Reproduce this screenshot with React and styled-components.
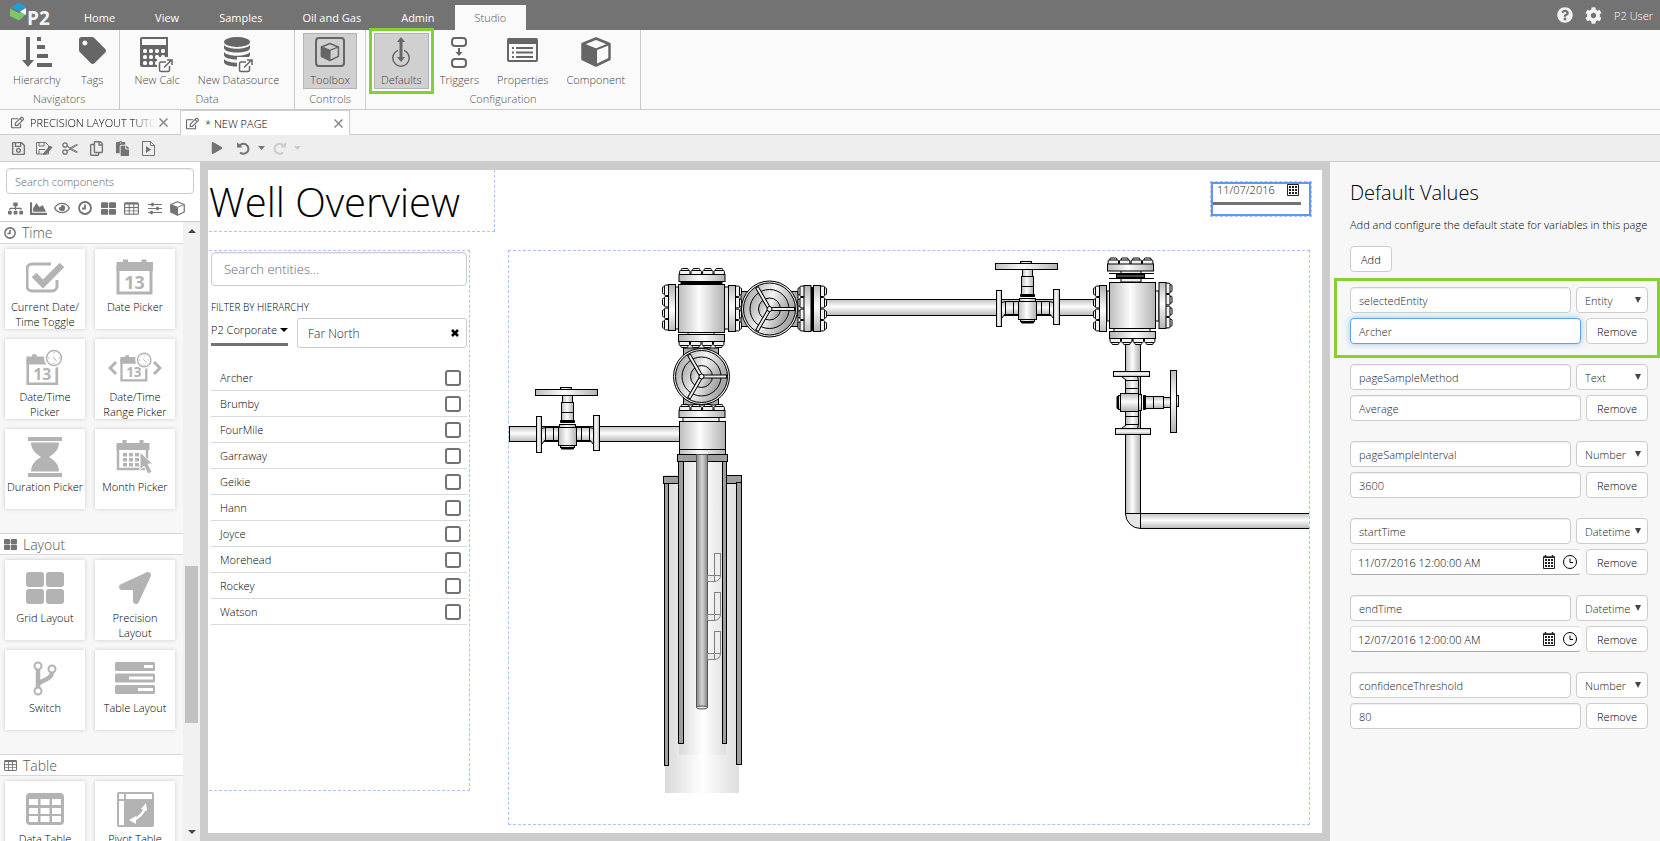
import React, { useState } from "react";
import styled, { createGlobalStyle, css } from "styled-components";
import {
  FaTag,
  FaSitemap,
  FaChartArea,
  FaRegEye,
  FaRegEdit,
  FaRegSave,
  FaRegCopy,
  FaPaste,
  FaPlay,
  FaLocationArrow,
  FaQuestionCircle,
  FaCog,
} from "react-icons/fa";

const GlobalStyle = createGlobalStyle`
  :root {
    --dark: #737373;
    --icon: #666;
    --line: #ccc;
    --green: #84d136;
    --dash: #a9c4f5;
  }
  * { box-sizing: border-box; }
  body {
    margin: 0;
    font-family: "Open Sans", "Noto Sans", sans-serif;
    font-size: 11px;
    font-weight: 300;
    line-height: 15px;
    color: #000;
  }
  button, input, select {
    font: inherit;
    color: inherit;
    margin: 0;
  }
  button { cursor: pointer; }
  svg { display: block; flex: none; }
`

const Page = styled.div`
  display: flex;
  flex-direction: column;
  height: 100vh;
  overflow: hidden;
  background: #fafafa;
`

/* ---------- header ---------- */

const Header = styled.header`
  flex: none;
  display: flex;
  align-items: flex-end;
  height: 30px;
  padding-right: 7px;
  background: var(--dark);
  color: white;
`

const LogoLink = styled.a`
  width: 64px;
  height: 30px;
  padding-left: 9px;
`

const Nav = styled.nav`
  display: flex;
  flex: 1;
`

const NavLink = styled.a`
  height: 25px;
  padding: 5px 20px 0;
  color: white;
  font-weight: 400;
  text-decoration: none;
  white-space: nowrap;
  ${({ $active }) => $active && `
    background: #fafafa;
    color: #555;
    font-weight: 300;
  `}
`

const HeaderTools = styled.div`
  display: flex;
  align-items: center;
  gap: 12px;
  height: 30px;
`

const HeaderButton = styled.button`
  border: 0;
  padding: 0;
  background: none;
  color: #f2f2f2;
`

/* ---------- ribbon ---------- */

const Ribbon = styled.div`
  flex: none;
  display: flex;
  height: 80px;
  border-bottom: 1px solid var(--line);
`

const RibbonGroup = styled.section`
  display: flex;
  flex-direction: column;
  align-items: center;
  padding: 3px 8px 0;
  border-right: 1px solid var(--line);
  &:first-child {
    padding-left: 6px;
    padding-right: 6px;
  }
`

const RibbonButtons = styled.div`
  display: flex;
  gap: 4px;
`

const RibbonButton = styled.button`
  display: flex;
  flex-direction: column;
  align-items: center;
  height: 56px;
  padding: 3px 6px 0;
  border: 1px solid transparent;
  background: none;
  color: #444;
  white-space: nowrap;
  ${({ $pressed }) => $pressed && `
    background: #d0d0d0;
    border-color: #b4b4b4;
  `}
  ${({ $marked }) => $marked && `
    outline: 3px solid var(--green);
    outline-offset: 2px;
  `}
`

const RibbonIcon = styled.span`
  display: flex;
  align-items: flex-start;
  height: 35px;
  color: var(--icon);
`

const GroupLabel = styled.span`
  margin-top: 2px;
  color: #555;
`

/* ---------- document tabs and toolbar ---------- */

const TabStrip = styled.div`
  flex: none;
  display: flex;
  align-items: flex-end;
  height: 25px;
  border-bottom: 1px solid var(--line);
`

const DocTab = styled.div`
  display: flex;
  align-items: center;
  width: 180px;
  height: 24px;
  padding: 0 12px 0 11px;
  ${({ $active }) => $active && `
    width: 170px;
    margin-bottom: -1px;
    padding: 0 6px 0 5px;
    height: 25px;
    border: 1px solid var(--line);
    border-bottom: 0;
    background: white;
  `}
`

const DocName = styled.span`
  flex: 1;
  min-width: 0;
  margin: 0 4px 0 6px;
  overflow: hidden;
  white-space: nowrap;
  ${({ $fade }) => $fade && css`
    mask-image: linear-gradient(90deg, #000 84%, transparent);
  `}
`

const IconButton = styled.button`
  display: flex;
  align-items: center;
  justify-content: center;
  width: ${({ $w }) => $w || 14}px;
  height: 16px;
  padding: 0;
  border: 0;
  background: none;
  color: var(--dark);
  &:disabled { color: #ccc; }
`

const Toolbar = styled.div`
  flex: none;
  display: flex;
  align-items: center;
  gap: 10px;
  height: 27px;
  padding: 0 10px;
  background: #eee;
  border-bottom: 1px solid var(--line);
`

const RunTools = styled.div`
  display: flex;
  align-items: center;
  gap: 7px;
  margin-left: 39px;
`

/* ---------- component toolbox ---------- */

const Workspace = styled.div`
  flex: 1;
  min-height: 0;
  display: flex;
`

const Toolbox = styled.aside`
  flex: none;
  width: 200px;
  display: flex;
  flex-direction: column;
`

const ToolboxHead = styled.div`
  flex: none;
  height: 60px;
  padding: 6px 6px 0;
  background: white;
  border-bottom: 1px solid var(--line);
`

const Field = styled.input`
  width: 100%;
  min-width: 0;
  height: 26px;
  padding: 0 8px;
  border: 1px solid var(--line);
  border-radius: 4px;
  background: white;
  color: #222;
  outline: none;
  box-shadow: inset 0 1px 1px rgba(0, 0, 0, 0.07);
  &::placeholder { color: #666; opacity: 1; }
  ${({ $focus }) => $focus && `
    border-color: #5ba5e6;
    box-shadow: 0 0 6px rgba(91, 165, 230, 0.6);
  `}
`

const Categories = styled.div`
  display: flex;
  justify-content: space-between;
  padding: 6px 7px 0 0;
`

const ScrollArea = styled.div`
  flex: 1;
  min-height: 0;
  display: flex;
  background: #f7f7f7;
`

const ToolList = styled.div`
  flex: 1;
  overflow: hidden;
`

const Section = styled.section`
  padding-bottom: 24px;
`

const SectionTitle = styled.h2`
  display: flex;
  align-items: center;
  gap: 6px;
  height: 22px;
  margin: 0;
  padding-left: 4px;
  border: solid #d8d8d8;
  border-width: ${({ $first }) => ($first ? 0 : 1)}px 0 1px;
  background: white;
  color: #555;
  font-size: 14px;
  font-weight: 300;
  svg { color: var(--dark); }
`

const Cards = styled.div`
  display: grid;
  grid-template-columns: 80px 80px;
  gap: 10px;
  padding: 5px 5px 0;
`

const Card = styled.button`
  display: flex;
  flex-direction: column;
  align-items: center;
  gap: 3px;
  height: 80px;
  padding: 9px 0 0;
  border: 0;
  background: white;
  box-shadow: 0 0 4px rgba(0, 0, 0, 0.18);
`

const CardIcon = styled.span`
  display: flex;
  align-items: center;
  height: 38px;
  color: #b3b3b3;
`

const ScrollTrack = styled.div`
  width: 17px;
  display: flex;
  flex-direction: column;
  align-items: center;
  padding: 7px 0;
  background: #f1f1f1;
  color: #444;
  svg:last-child { margin-top: auto; }
`

const ScrollThumb = styled.div`
  width: 13px;
  height: 157px;
  margin-top: 333px;
  background: #c1c1c1;
`

/* ---------- page canvas ---------- */

const Stage = styled.main`
  flex: 1;
  min-width: 0;
  display: flex;
  padding: 8px;
  background: #ccc;
`

const Canvas = styled.div`
  flex: 1;
  min-width: 0;
  display: flex;
  flex-direction: column;
  gap: 18px;
  padding: 0 12px 8px 1px;
  background: white;
`

const TopRow = styled.div`
  flex: none;
  display: flex;
  justify-content: space-between;
  align-items: flex-start;
`

const TitleBox = styled.div`
  width: 286px;
  height: 62px;
  border: dashed var(--dash);
  border-width: 0 1px 1px 0;
`

const PageTitle = styled.h1`
  margin: 0;
  padding-top: 4px;
  font-size: 40px;
  line-height: 56px;
  font-weight: 300;
  color: black;
  white-space: nowrap;
`

const DateBox = styled.div`
  width: 102px;
  height: 36px;
  margin: 11px -2px 0 0;
  border: 1px dashed var(--dash);
`

const DateFrame = styled.div`
  height: 34px;
  border: 2px solid #6495ed;
`

const DateValue = styled.label`
  display: flex;
  justify-content: space-between;
  align-items: flex-start;
  width: 88px;
  height: 21px;
  padding-right: 2px;
  border-bottom: 3px solid var(--dark);
  color: #333;
`

const DateInput = styled.input`
  width: 66px;
  height: 12px;
  padding: 0 0 0 4px;
  border: 0;
  background: none;
  color: #111;
  line-height: 12px;
`

const Widgets = styled.div`
  flex: 1;
  min-height: 0;
  display: flex;
  align-items: flex-start;
  gap: 38px;
`

const EntityBox = styled.section`
  flex: none;
  width: 261px;
  height: 541px;
  padding: 1px 2px;
  border: dashed var(--dash);
  border-width: 1px 1px 1px 0;
`

const EntitySearch = styled(Field)`
  height: 34px;
  padding: 0 12px;
  font-size: 13px;
`

const FilterLabel = styled.div`
  margin: 14px 0 3px;
  font-size: 10px;
`

const FilterRow = styled.div`
  display: flex;
  gap: 9px;
`

const CorporateSelect = styled.button`
  display: flex;
  align-items: center;
  justify-content: space-between;
  width: 77px;
  height: 28px;
  padding: 0 0 2px;
  border: 0;
  border-bottom: 3px solid var(--dark);
  background: none;
  white-space: nowrap;
`

const Chip = styled.div`
  flex: 1;
  display: flex;
  align-items: center;
  justify-content: space-between;
  height: 30px;
  padding: 0 7px 0 10px;
  border: 1px solid var(--line);
  border-radius: 3px;
  color: #222;
  font-size: 12px;
`

const EntityList = styled.ul`
  margin: 17px 0 0;
  padding: 0;
  list-style: none;
`

const EntityRow = styled.label`
  display: flex;
  align-items: center;
  justify-content: space-between;
  height: 26px;
  padding: 0 6px 0 9px;
  border-bottom: 1px solid #d9d9d9;
`

const Tick = styled.input`
  appearance: none;
  width: 16px;
  height: 16px;
  border: 2px solid var(--dark);
  border-radius: 3px;
  background: white;
`

const GraphicBox = styled.section`
  flex: 1;
  min-width: 0;
  height: 100%;
  overflow: hidden;
  border: 1px dashed var(--dash);
`

/* ---------- default values ---------- */

const Panel = styled.aside`
  flex: none;
  width: 330px;
  padding: 19px 0 0 4px;
  background: #f7f7f7;
`

const PanelTitle = styled.h2`
  margin: 0 0 12px 16px;
  font-size: 20px;
  line-height: 24px;
  font-weight: 300;
`

const PanelText = styled.p`
  margin: 0 0 14px 16px;
  white-space: nowrap;
`

const PanelButton = styled.button`
  height: 26px;
  padding: 0 10px;
  border: 1px solid var(--line);
  border-radius: 4px;
  background: white;
`

const AddButton = styled(PanelButton)`
  display: block;
  margin: 0 0 6px 16px;
`

const Variable = styled.div`
  display: grid;
  gap: 5px;
  padding: 6px 9px 11px 13px;
  margin-bottom: -3px;
  border: 3px solid transparent;
  ${({ $marked }) => $marked && `
    border-color: var(--green);
  `}
`

const NameRow = styled.div`
  display: grid;
  grid-template-columns: 1fr 72px;
  gap: 5px;
`

const ValueRow = styled.div`
  display: grid;
  grid-template-columns: 1fr 62px;
  gap: 5px;
`

const TypeWrap = styled.div`
  position: relative;
  svg {
    position: absolute;
    right: 7px;
    top: 10px;
    pointer-events: none;
    color: #444;
  }
`

const TypeSelect = styled.select`
  appearance: none;
  width: 100%;
  height: 26px;
  padding: 0 8px;
  border: 1px solid var(--line);
  border-radius: 4px;
  background: white;
  color: #222;
`

const DateField = styled.div`
  display: flex;
  align-items: center;
  gap: 8px;
  height: 26px;
  padding-right: 3px;
  border: 1px solid #ddd;
  border-right-color: transparent;
  border-bottom-color: #aaa;
  border-radius: 4px;
  background: white;
`

const DateFieldInput = styled.input`
  flex: 1;
  min-width: 0;
  padding: 0 0 0 7px;
  border: 0;
  background: none;
`

/* ---------- icons ---------- */

const Logo = () => (
  <svg width="44" height="30" viewBox="0 0 44 30">
    <path d="M2 7l8-4 7.500 4L10 11z" fill="#1ba1e2" />
    <path d="M1 8.500l9 4.500 6-3v5l-6 5.500L1 16z" fill="#7dc66b" />
    <path d="M11 11.500l6-3.500v7z" fill="white" />
    <text x="18" y="25" fontSize="19" fontWeight="700" fill="#f4f4f4">P2</text>
  </svg>
)

const HierarchyIcon = () => (
  <svg width="30" height="30" viewBox="0 0 30 30" fill="currentColor">
    <path d="M4 0h4v23h4l-6 7-6-7h4zM15 0h4v4h-4zM15 8h8v4h-8zM15 17h11v4H15zM15 26h15v4H15z" />
  </svg>
)

const External = ({ x = 0, y = 0 }) => (
  <g transform={`translate(${x} ${y})`} fill="none" stroke="currentColor" strokeWidth="1.500">
    <rect x="-1" y="-1" width="17" height="17" fill="#fafafa" stroke="none" />
    <path d="M8 4H3a1.500 1.500 0 0 0-1.500 1.500V12A1.500 1.500 0 0 0 3 13.500h7a1.500 1.500 0 0 0 1.500-1.500V8M6 9.500l7-7M9 2h5v5" />
  </g>
)

const CalcIcon = () => (
  <svg width="34" height="36" viewBox="0 0 34 36" fill="currentColor">
    <path fillRule="evenodd" d="M2 0h26v30H2a2 2 0 0 1-2-2V2a2 2 0 0 1 2-2zM2 2v6h24V2z" />
    {[12, 18, 24].map((y) =>
      [3, 9, 15, 21].map((x) => <rect key={`${x}-${y}`} x={x} y={y} width="4" height="4" rx="1.500" fill="#fafafa" />)
    )}
    <External x={18} y={21} />
  </svg>
)

const DatasourceIcon = () => (
  <svg width="30" height="36" viewBox="0 0 30 36" fill="currentColor">
    <ellipse cx="13" cy="5" rx="13" ry="5" />
    {[8, 15, 22].map((y) => (
      <path key={y} d={`M0 ${y}c4 5 22 5 26 0v3c0 6-26 6-26 0z`} />
    ))}
    <External x={14} y={21} />
  </svg>
)

const CubeShape = () => (
  <>
    <path d="M15 1.500L28.500 7v15L15 28.500 1.500 22V7z" fill="none" stroke="currentColor" strokeWidth="2.500" strokeLinejoin="round" />
    <path d="M1.500 7L15 12.500l13.500-5.500M15 12.500v16" fill="none" stroke="currentColor" strokeWidth="2" />
    <path d="M1.500 7L15 12.500V28L1.500 22z" fill="currentColor" />
  </>
)

const CubeIcon = ({ size = 30 }) => (
  <svg width={size} height={size} viewBox="0 0 30 30"><CubeShape /></svg>
)

const ToolboxIcon = () => (
  <svg width="30" height="30" viewBox="0 0 30 30">
    <rect x="1" y="1" width="28" height="28" rx="3" fill="none" stroke="currentColor" strokeWidth="2" />
    <g transform="translate(5.500 5.500) scale(.63)"><CubeShape /></g>
  </svg>
)

const DefaultsIcon = () => (
  <svg width="20" height="31" viewBox="0 0 20 31">
    <circle cx="10" cy="21" r="8.200" fill="none" stroke="currentColor" strokeWidth="1.500" />
    <path d="M7 9h6v8H7z" fill="#d0d0d0" />
    <path d="M10 0l4 5h-2.500v15H14l-4 5-4-5h2.500V5H6z" fill="currentColor" />
  </svg>
)

const TriggersIcon = () => (
  <svg width="18" height="31" viewBox="0 0 18 31" fill="none" stroke="currentColor" strokeWidth="2">
    <rect x="2" y="1" width="14" height="8" rx="3" />
    <rect x="2" y="22" width="14" height="8" rx="3" />
    <path d="M9 11v5" />
    <path d="M5.500 15h7L9 19z" fill="currentColor" stroke="none" />
  </svg>
)

const PropertiesIcon = () => (
  <svg width="31" height="30" viewBox="0 0 31 30">
    <rect x="1" y="2" width="29" height="22" rx="1" fill="none" stroke="currentColor" strokeWidth="2" />
    <path d="M1 1h29v6H1z" fill="currentColor" />
    <path d="M5 11h2m2 0h17M5 15.500h2m2 0h17M5 20h2m2 0h17" stroke="currentColor" strokeWidth="2" />
  </svg>
)

const CloseIcon = () => (
  <svg width="9" height="9" viewBox="0 0 9 9" stroke="#888" strokeWidth="1.500">
    <path d="M.5.500l8 8M8.500.500l-8 8" />
  </svg>
)

const SaveAsIcon = () => (
  <svg width="17" height="14" viewBox="0 0 17 14" fill="none" stroke="currentColor">
    <path d="M.5 1.500h9l3 3v8.500H.5zM3 1.500v3.500h5V1.500M3 13V8.500h6" />
    <path d="M8 12l6-7 2 1.500-6 6.500-2.500.500z" fill="currentColor" />
  </svg>
)

const CutIcon = () => (
  <svg width="16" height="13" viewBox="0 0 16 13" fill="none" stroke="currentColor">
    <circle cx="3" cy="3" r="2.200" strokeWidth="1.300" />
    <circle cx="3" cy="10" r="2.200" strokeWidth="1.300" />
    <path d="M5 4l3 2 6.500-3.500 1 .5L5 9M5 4.200L15.500 10l-1 .5L7.500 7" />
  </svg>
)

const PlayFileIcon = () => (
  <svg width="13" height="15" viewBox="0 0 13 15" fill="none" stroke="currentColor">
    <path d="M.5.500h8l4 4v10H.5zM8.500.500v4h4" />
    <path d="M4 5l5 3.500L4 12z" fill="currentColor" stroke="none" />
  </svg>
)

const UndoIcon = ({ flip }) => (
  <svg width="13" height="13" viewBox="0 0 13 13" fill="none" stroke="currentColor" strokeWidth="2">
    <g transform={flip ? "translate(13 0) scale(-1 1)" : undefined}>
      <path d="M2 4.500A5 5 0 1 1 3 10.500" />
      <path d="M0 0v5.500h5.500z" fill="currentColor" stroke="none" />
    </g>
  </svg>
)

const Caret = ({ w = 7, h = 4, up }) => (
  <svg width={w} height={h} viewBox="0 0 8 4" preserveAspectRatio="none" fill="currentColor">
    <path d={up ? "M0 4l4-4 4 4z" : "M0 0h8L4 4z"} />
  </svg>
)

const ClockIcon = ({ size = 13, thin }) => (
  <svg width={size} height={size} viewBox="0 0 14 14" fill="none" stroke="currentColor" strokeWidth={thin ? 1 : 1.8}>
    <circle cx="7" cy="7" r={thin ? 6.5 : 6} />
    <path d="M7 3.500V7.500H10" transform={thin ? undefined : "translate(14 0) scale(-1 1)"} />
  </svg>
)

const BlocksIcon = ({ w = 15, h = 13 }) => (
  <svg width={w} height={h} viewBox="0 0 38 32" fill="currentColor">
    <rect width="18" height="15" rx="3" />
    <rect x="20" width="18" height="15" rx="3" />
    <rect y="17" width="18" height="15" rx="3" />
    <rect x="20" y="17" width="18" height="15" rx="3" />
  </svg>
)

const TableIcon = ({ w = 15, h = 13 }) => (
  <svg width={w} height={h} viewBox="0 0 38 32">
    <rect width="38" height="32" rx="4" fill="currentColor" />
    {[6, 15, 23].map((y) =>
      [3, 14.5, 26].map((x) => <rect key={`${x}-${y}`} x={x} y={y} width="9" height="6" fill="white" />)
    )}
  </svg>
)

const SlidersIcon = () => (
  <svg width="14" height="13" viewBox="0 0 14 13" stroke="currentColor" fill="currentColor">
    <path d="M0 2.500h14M0 6.500h14M0 10.500h14" />
    <path d="M4 1.500h1v2H4zM9 5.500h1v2H9zM3 9.500h1v2H3z" strokeWidth="1.500" />
  </svg>
)

const GridCalendar = ({ rings }) => (
  <svg width="12" height={rings ? 14 : 12} viewBox={rings ? "0 -2 12 14" : "0 0 12 12"}>
    <path d="M.5.500h11v11H.5z" fill="none" stroke="#222" />
    {rings && <path d="M0 0h12M2.500-2v2M9.500-2v2" stroke="#222" strokeWidth="1.500" />}
    {[2, 5, 8].map((y) =>
      [2, 5, 8].map((x) => <rect key={`${x}-${y}`} x={x} y={y} width="2" height="2" fill="#222" />)
    )}
  </svg>
)

const ToggleIcon = () => (
  <svg width="38" height="38" viewBox="0 0 38 38" fill="none" stroke="currentColor">
    <path d="M31 22v6a5 5 0 0 1-5 5H6a5 5 0 0 1-5-5V11a5 5 0 0 1 5-5h19" strokeWidth="3" />
    <path d="M8 17l9 9L36 7" strokeWidth="6.500" />
  </svg>
)

const CalendarShape = () => (
  <>
    <path d="M2 7v28h33V7" fill="none" stroke="currentColor" strokeWidth="3" />
    <path d="M.5 4h6.500V1.500h5V4h13.500V1.500h5V4H37v9H.5z" fill="currentColor" />
    <text x="18.500" y="31" textAnchor="middle" fontSize="18" fontWeight="700" fill="currentColor">13</text>
  </>
)

const CalendarIcon = () => (
  <svg width="38" height="38" viewBox="0 0 38 38"><CalendarShape /></svg>
)

const ClockBadge = () => (
  <>
    <circle cx="28" cy="10" r="10" fill="white" />
    <circle cx="28" cy="10" r="7.500" fill="white" stroke="currentColor" strokeWidth="1.500" />
    <path d="M27 9l3.500 4M28 4v1.500M28 14.500v1.500M22 10h1.500M32.500 10h1.500" fill="none" stroke="currentColor" />
  </>
)

const DateTimeIcon = () => (
  <svg width="38" height="38" viewBox="0 0 38 38">
    <g transform="translate(0 5) scale(.88)"><CalendarShape /></g>
    <ClockBadge />
  </svg>
)

const RangeIcon = () => (
  <svg width="54" height="38" viewBox="0 0 54 38">
    <g transform="translate(12 6) scale(.75)"><CalendarShape /></g>
    <g transform="translate(11 3) scale(.9)"><ClockBadge /></g>
    <path d="M8 14l-6 6 6 6M46 14l6 6-6 6" fill="none" stroke="currentColor" strokeWidth="3" />
  </svg>
)

const HourglassIcon = () => (
  <svg width="36" height="40" viewBox="0 0 36 40" fill="currentColor">
    <path d="M1 0h34v4H1zM1 36h34v4H1zM4 5.500h28c0 8-6 12-10 14.500 4 2.500 10 6.500 10 14.500H4c0-8 6-12 10-14.500C10 17.500 4 13.500 4 5.500z" />
  </svg>
)

const MonthIcon = () => (
  <svg width="38" height="38" viewBox="0 0 38 38" fill="currentColor">
    <path d="M2 8v23h29V8" fill="none" stroke="currentColor" strokeWidth="2.500" />
    <path d="M.5 5h6V2h4v3h13V2h4v3h6v7H.5z" />
    {[15, 20, 25].map((y) =>
      [7, 13, 19].map((x) => <rect key={`${x}-${y}`} x={x} y={y} width="4" height="3.500" />)
    )}
    <path d="M24 14l13 12h-5l4 8-4 2-4-8-4 4z" stroke="white" />
  </svg>
)

const BranchIcon = () => (
  <svg width="26" height="36" viewBox="0 0 26 36" fill="none" stroke="currentColor">
    <path d="M6 8v20M6 26c0-7 14-4 14-15" strokeWidth="4.500" />
    <circle cx="6" cy="6" r="3.500" fill="white" strokeWidth="2" />
    <circle cx="6" cy="31" r="3.500" fill="white" strokeWidth="2" />
    <circle cx="20" cy="9" r="3.500" fill="white" strokeWidth="2" />
  </svg>
)

const TableLayoutIcon = () => (
  <svg width="40" height="34" viewBox="0 0 40 34" fill="currentColor">
    <rect y="1" width="40" height="9" rx="1.500" />
    <rect y="12.500" width="40" height="9" rx="1.500" />
    <rect y="24" width="40" height="9" rx="1.500" />
    <path d="M29 4h9v3h-9zM14 15.500h24v3H14zM23 27h15v3H23z" fill="white" />
  </svg>
)

const PivotIcon = () => (
  <svg width="37" height="35" viewBox="0 0 37 35">
    <rect width="37" height="35" rx="2" fill="currentColor" />
    <path d="M2 2h5v5H2zM9 2h26v5H9zM2 9h5v24H2z" fill="white" />
    <path d="M15 28c6-1 12-7 13-13" fill="none" stroke="white" strokeWidth="2.500" />
    <path d="M24 17l5-6 1 8zM19 24l-7 4 7 4z" fill="white" />
  </svg>
)

/* ---------- process drawing ---------- */

const DARK = "#000"

const Gradients = () => (
  <defs>
    <linearGradient id="across" x1="0" x2="1" y1="0" y2="0">
      <stop offset="0" stopColor="#bdbdbd" />
      <stop offset=".45" stopColor="#fcfcfc" />
      <stop offset="1" stopColor="#b2b2b2" />
    </linearGradient>
    <linearGradient id="down" x1="0" x2="0" y1="0" y2="1">
      <stop offset="0" stopColor="#c2c2c2" />
      <stop offset=".45" stopColor="#fcfcfc" />
      <stop offset="1" stopColor="#b8b8b8" />
    </linearGradient>
    <linearGradient id="casing" x1="0" x2="1" y1="0" y2="0">
      <stop offset="0" stopColor="#d9d9d9" />
      <stop offset=".5" stopColor="#fff" />
      <stop offset="1" stopColor="#dedede" />
    </linearGradient>
    <linearGradient id="tubing" x1="0" x2="1" y1="0" y2="0">
      <stop offset="0" stopColor="#858585" />
      <stop offset=".5" stopColor="#d6d6d6" />
      <stop offset="1" stopColor="#858585" />
    </linearGradient>
    <linearGradient id="wheel" x1="0" x2="1" y1="0" y2=".4">
      <stop offset="0" stopColor="#9a9a9a" />
      <stop offset=".55" stopColor="#f4f4f4" />
      <stop offset="1" stopColor="#a6a6a6" />
    </linearGradient>
  </defs>
)

// Plate with four bolts on its upper side, (x, y) is the middle of the plate.
const Flange = ({ x, y, turn = 0 }) => (
  <g transform={`translate(${x} ${y}) rotate(${turn})`} stroke={DARK}>
    {[-17.2, -5.8, 5.8, 17.2].map((b) => (
      <g key={b} fill="#f2f2f2">
        <rect x={b - 3.5} y="-9.500" width="7" height="4" rx="1" />
        <rect x={b - 5.2} y="-7.500" width="10.400" height="4.500" rx="1" />
      </g>
    ))}
    <rect x="-23" y="-3.500" width="46" height="7" fill="url(#across)" />
  </g>
)

const GateValve = ({ x, y, turn = 0 }) => (
  <g transform={`translate(${x} ${y}) rotate(${turn})`} stroke={DARK} fill="url(#across)">
    <g fill="url(#down)">
      <path d="M-26-5l4-1V6l-4 5zM26-5l-4-1V6l4 5z" />
      <rect x="-22" y="-6" width="13" height="13" />
      <rect x="9" y="-6" width="13" height="13" />
      <path d="M-14-6V7M14-6V7" />
    </g>
    <rect x="-31" y="-17" width="5" height="36" />
    <rect x="26" y="-18" width="6" height="35" />
    <rect x="-5" y="-38" width="10" height="14" />
    <rect x="-6" y="-31" width="12" height="18" />
    <path d="M-6-21H6" />
    <path d="M-7-13H7v2H-7z" fill={DARK} />
    <rect x="-8" y="-9" width="16" height="4" />
    <rect x="-9" y="-6" width="18" height="18" />
    <rect x="-7" y="12" width="14" height="2" />
    <path d="M-6 14.500H6v1H-6z" fill={DARK} />
    <rect x="-7" y="-46" width="11" height="3" />
    <rect x="-32" y="-44" width="62" height="6" />
  </g>
)

const HandWheel = ({ x, y }) => (
  <g transform={`translate(${x} ${y})`} stroke={DARK}>
    <circle r="28" fill="#e6e6e6" />
    <circle r="26" fill="url(#wheel)" />
    <circle r="19.500" fill="url(#wheel)" />
    <circle r="11" fill="url(#wheel)" />
    {[0, 120, 240].map((a) => (
      <rect key={a} x="2" y="-1.500" width="23" height="3" fill="#eee" transform={`rotate(${a})`} />
    ))}
    <circle r="2.500" fill="#eee" />
  </g>
)

const Pipe = ({ x, y, w, h, vertical }) => (
  <rect x={x} y={y} width={w} height={h} fill={vertical ? "url(#across)" : "url(#down)"} stroke={DARK} />
)

const Perforation = ({ y }) => (
  <g transform={`translate(707.500 ${y})`} fill="#ececec" stroke="#808080">
    <rect x="7" y="0" width="6" height="22" />
    <rect x="0" y="22" width="7" height="6" />
    <path d="M7 28a6 6 0 0 0 6-6H7z" />
  </g>
)

const ProcessDrawing = () => (
  <svg width="802" height="574" viewBox="509 251 802 574" role="img" aria-label="Well process diagram">
    <Gradients />
    {/* flow line into the tree and out to the right */}
    <Pipe x={509.5} y={426.5} w={170} h={15} />
    <Pipe x={820} y={299.5} w={280} h={16} />
    <Pipe x={1125.5} y={340} w={15} h={174} vertical />
    <Pipe x={1140.5} y={513.5} w={175} h={15} />
    <path d="M1125.500 513.500h15v15a15 15 0 0 1-15-15z" fill="#e6e6e6" stroke={DARK} />

    {/* main tree */}
    <rect x="741" y="291.500" width="57" height="35" fill="#ababab" stroke={DARK} />
    <rect x="683.500" y="348" width="35" height="57" fill="#ababab" stroke={DARK} />
    <rect x="680.500" y="280" width="42" height="5" fill={DARK} />
    <rect x="688" y="331" width="26" height="5" fill="#eee" stroke={DARK} />
    <rect x="675" y="287" width="56" height="42" fill="#e6e6e6" stroke={DARK} />
    <Flange x={702} y={278} />
    <Flange x={672} y={307.5} turn={-90} />
    <Flange x={732} y={308.5} turn={90} />
    <Flange x={701.500} y={338} turn={180} />
    <rect x="678.500" y="284.500" width="46" height="48" fill="url(#across)" stroke={DARK} />
    <rect x="683" y="416" width="36" height="6" fill="#eee" stroke={DARK} />
    <Flange x={702} y={414} />
    <rect x="679.500" y="421.500" width="46" height="28" fill="url(#across)" stroke={DARK} />
    <Flange x={807.500} y={308.5} turn={-90} />
    <rect x="811" y="287" width="2" height="44" fill={DARK} />
    <Flange x={817} y={308.5} turn={90} />
    <HandWheel x={769.500} y={309} />
    <HandWheel x={701.500} y={376.500} />

    {/* right tree */}
    <rect x="1121" y="270" width="20" height="12" fill="#eee" stroke={DARK} />
    <rect x="1116.500" y="274.500" width="28" height="3" fill="#444" stroke={DARK} />
    <path d="M1109 273.500h45M1109 278.500h45" stroke={DARK} />
    <rect x="1107" y="291" width="52" height="30" fill="#eee" stroke={DARK} />
    <rect x="1114" y="326" width="36" height="8" fill="#eee" stroke={DARK} />
    <Flange x={1130.500} y={267.500} />
    <Flange x={1103} y={308.500} turn={-90} />
    <Flange x={1162.500} y={305.500} turn={90} />
    <Flange x={1132.500} y={335} turn={180} />
    <rect x="1109.500" y="282.500" width="46" height="46" fill="url(#across)" stroke={DARK} />

    <GateValve x={567.500} y={433.500} />
    <GateValve x={1027.500} y={307.500} />
    <GateValve x={1132.500} y={402.500} turn={90} />

    {/* well bore */}
    <rect x="665" y="475" width="74" height="318" fill="url(#casing)" />
    <rect x="679" y="456" width="47" height="299" fill="url(#casing)" />
    <g fill="#9e9e9e" stroke={DARK}>
      <rect x="663.500" y="476.500" width="15" height="7" />
      <rect x="726.500" y="475.500" width="15" height="8" />
      <rect x="664.500" y="483.500" width="4" height="282" />
      <rect x="736.500" y="482.500" width="5" height="282" />
      <rect x="678.500" y="461.500" width="5" height="282" />
      <rect x="722.500" y="461.500" width="4" height="282" />
      <rect x="677.500" y="454.500" width="50" height="7" />
    </g>
    <rect x="679.500" y="449.500" width="46" height="5" fill="url(#across)" stroke={DARK} />
    <rect x="696.500" y="454.500" width="11" height="253" fill="url(#tubing)" stroke="#555" />
    <ellipse cx="702" cy="707.500" rx="5.500" ry="1.500" fill="#e6e6e6" stroke="#555" />
    <Perforation y={553.5} />
    <Perforation y={592.5} />
    <Perforation y={631.5} />
  </svg>
)

/* ---------- data ---------- */

const navItems = ["Home", "View", "Samples", "Oil and Gas", "Admin", "Studio"]

const ribbon = [
  { label: "Navigators", items: [
    { name: "Hierarchy", icon: <HierarchyIcon /> },
    { name: "Tags", icon: <FaTag size={27} /> },
  ]},
  { label: "Data", items: [
    { name: "New Calc", icon: <CalcIcon /> },
    { name: "New Datasource", icon: <DatasourceIcon /> },
  ]},
  { label: "Controls", items: [
    { name: "Toolbox", icon: <ToolboxIcon />, pressed: true },
  ]},
  { label: "Configuration", items: [
    { name: "Defaults", icon: <DefaultsIcon />, pressed: true, marked: true },
    { name: "Triggers", icon: <TriggersIcon /> },
    { name: "Properties", icon: <PropertiesIcon /> },
    { name: "Component", icon: <CubeIcon /> },
  ]},
]

const fileTools = [
  { name: "Save", icon: <FaRegSave size={15} /> },
  { name: "Save as", icon: <SaveAsIcon /> },
  { name: "Cut", icon: <CutIcon /> },
  { name: "Copy", icon: <FaRegCopy size={15} /> },
  { name: "Paste", icon: <FaPaste size={15} /> },
  { name: "Preview", icon: <PlayFileIcon /> },
]

const categories = [
  { name: "Hierarchy", icon: <FaSitemap size={15} /> },
  { name: "Charts", icon: <FaChartArea size={17} /> },
  { name: "Visual", icon: <FaRegEye size={16} /> },
  { name: "Time", icon: <ClockIcon size={14} /> },
  { name: "Layout", icon: <BlocksIcon /> },
  { name: "Table", icon: <TableIcon /> },
  { name: "Input", icon: <SlidersIcon /> },
  { name: "Other", icon: <CubeIcon size={15} /> },
]

const sections = [
  { title: "Time", icon: <ClockIcon size={12} />, cards: [
    { name: "Current Date/ Time Toggle", icon: <ToggleIcon /> },
    { name: "Date Picker", icon: <CalendarIcon /> },
    { name: "Date/Time Picker", icon: <DateTimeIcon /> },
    { name: "Date/Time Range Picker", icon: <RangeIcon /> },
    { name: "Duration Picker", icon: <HourglassIcon /> },
    { name: "Month Picker", icon: <MonthIcon /> },
  ]},
  { title: "Layout", icon: <BlocksIcon w={13} h={11} />, cards: [
    { name: "Grid Layout", icon: <BlocksIcon w={38} h={32} /> },
    { name: "Precision Layout", icon: <FaLocationArrow size={32} /> },
    { name: "Switch", icon: <BranchIcon /> },
    { name: "Table Layout", icon: <TableLayoutIcon /> },
  ]},
  { title: "Table", icon: <TableIcon w={13} h={11} />, cards: [
    { name: "Data Table", icon: <TableIcon w={38} h={32} /> },
    { name: "Pivot Table", icon: <PivotIcon /> },
  ]},
]

const entities = ["Archer", "Brumby", "FourMile", "Garraway", "Geikie", "Hann", "Joyce", "Morehead", "Rockey", "Watson"]

const variables = [
  { name: "selectedEntity", type: "Entity", value: "Archer", marked: true },
  { name: "pageSampleMethod", type: "Text", value: "Average" },
  { name: "pageSampleInterval", type: "Number", value: "3600" },
  { name: "startTime", type: "Datetime", value: "11/07/2016 12:00:00 AM" },
  { name: "endTime", type: "Datetime", value: "12/07/2016 12:00:00 AM" },
  { name: "confidenceThreshold", type: "Number", value: "80" },
]

const VariableEditor = ({ data }) => {
  const [type, setType] = useState(data.type)

  return (
    <Variable $marked={data.marked}>
      <NameRow>
        <Field aria-label="Variable name" defaultValue={data.name} />
        <TypeWrap>
          <TypeSelect aria-label={`${data.name} type`} value={type} onChange={(e) => setType(e.target.value)}>
            {["Entity", "Text", "Number", "Datetime"].map((t) => <option key={t}>{t}</option>)}
          </TypeSelect>
          <Caret w={6} h={6} />
        </TypeWrap>
      </NameRow>
      <ValueRow>
        {type === "Datetime" ? (
          <DateField>
            <DateFieldInput aria-label={`${data.name} value`} defaultValue={data.value} />
            <GridCalendar rings />
            <ClockIcon size={14} thin />
          </DateField>
        ) : (
          <Field aria-label={`${data.name} value`} defaultValue={data.value} $focus={data.marked} />
        )}
        <PanelButton>Remove</PanelButton>
      </ValueRow>
    </Variable>
  )
}

const App = () => (
  <>
    <GlobalStyle />
    <Page>
      <Header>
        <LogoLink href="#" aria-label="P2"><Logo /></LogoLink>
        <Nav>
          {navItems.map((item) => (
            <NavLink key={item} href="#" $active={item === "Studio"}>{item}</NavLink>
          ))}
        </Nav>
        <HeaderTools>
          <HeaderButton aria-label="Help"><FaQuestionCircle size={16} /></HeaderButton>
          <HeaderButton aria-label="Settings"><FaCog size={17} /></HeaderButton>
          <span>P2 User</span>
        </HeaderTools>
      </Header>

      <Ribbon>
        {ribbon.map((group) => (
          <RibbonGroup key={group.label}>
            <RibbonButtons>
              {group.items.map((item) => (
                <RibbonButton key={item.name} $pressed={item.pressed} $marked={item.marked}>
                  <RibbonIcon>{item.icon}</RibbonIcon>
                  <span>{item.name}</span>
                </RibbonButton>
              ))}
            </RibbonButtons>
            <GroupLabel>{group.label}</GroupLabel>
          </RibbonGroup>
        ))}
      </Ribbon>

      <TabStrip>
        <DocTab>
          <FaRegEdit size={13} color="#666" />
          <DocName $fade>PRECISION LAYOUT TUTORIAL</DocName>
          <IconButton $w={9} aria-label="Close tab"><CloseIcon /></IconButton>
        </DocTab>
        <DocTab $active>
          <FaRegEdit size={13} color="#666" />
          <DocName>* NEW PAGE</DocName>
          <IconButton $w={9} aria-label="Close tab"><CloseIcon /></IconButton>
        </DocTab>
      </TabStrip>

      <Toolbar>
        {fileTools.map((tool) => (
          <IconButton key={tool.name} $w={16} aria-label={tool.name}>{tool.icon}</IconButton>
        ))}
        <RunTools>
          <IconButton $w={24} aria-label="Run"><FaPlay size={12} /></IconButton>
          <IconButton aria-label="Undo"><UndoIcon /></IconButton>
          <IconButton $w={8} aria-label="Undo history"><Caret /></IconButton>
          <IconButton disabled aria-label="Redo"><UndoIcon flip /></IconButton>
          <IconButton $w={8} disabled aria-label="Redo history"><Caret /></IconButton>
        </RunTools>
      </Toolbar>

      <Workspace>
        <Toolbox>
          <ToolboxHead>
            <Field placeholder="Search components" aria-label="Search components" />
            <Categories>
              {categories.map((c) => (
                <IconButton key={c.name} $w={18} aria-label={c.name}>{c.icon}</IconButton>
              ))}
            </Categories>
          </ToolboxHead>
          <ScrollArea>
            <ToolList>
              {sections.map((section, index) => (
                <Section key={section.title}>
                  <SectionTitle $first={index === 0}>{section.icon}{section.title}</SectionTitle>
                  <Cards>
                    {section.cards.map((card) => (
                      <Card key={card.name}>
                        <CardIcon>{card.icon}</CardIcon>
                        {card.name}
                      </Card>
                    ))}
                  </Cards>
                </Section>
              ))}
            </ToolList>
            <ScrollTrack>
              <Caret w={8} h={4} up />
              <ScrollThumb />
              <Caret w={8} h={4} />
            </ScrollTrack>
          </ScrollArea>
        </Toolbox>

        <Stage>
          <Canvas>
            <TopRow>
              <TitleBox><PageTitle>Well Overview</PageTitle></TitleBox>
              <DateBox>
                <DateFrame>
                  <DateValue>
                    <DateInput aria-label="Date" defaultValue="11/07/2016" />
                    <GridCalendar />
                  </DateValue>
                </DateFrame>
              </DateBox>
            </TopRow>
            <Widgets>
              <EntityBox>
                <EntitySearch placeholder="Search entities..." aria-label="Search entities" />
                <FilterLabel>FILTER BY HIERARCHY</FilterLabel>
                <FilterRow>
                  <CorporateSelect>P2 Corporate<Caret w={8} h={4} /></CorporateSelect>
                  <Chip>
                    Far North
                    <IconButton $w={9} aria-label="Clear filter">
                      <svg width="8" height="8" viewBox="0 0 8 8" stroke="black" strokeWidth="2.500"><path d="M1 1l6 6M7 1L1 7" /></svg>
                    </IconButton>
                  </Chip>
                </FilterRow>
                <EntityList>
                  {entities.map((name) => (
                    <li key={name}>
                      <EntityRow>{name}<Tick type="checkbox" /></EntityRow>
                    </li>
                  ))}
                </EntityList>
              </EntityBox>
              <GraphicBox><ProcessDrawing /></GraphicBox>
            </Widgets>
          </Canvas>
        </Stage>

        <Panel>
          <PanelTitle>Default Values</PanelTitle>
          <PanelText>Add and configure the default state for variables in this page</PanelText>
          <AddButton>Add</AddButton>
          {variables.map((v) => <VariableEditor key={v.name} data={v} />)}
        </Panel>
      </Workspace>
    </Page>
  </>
)

export default App
